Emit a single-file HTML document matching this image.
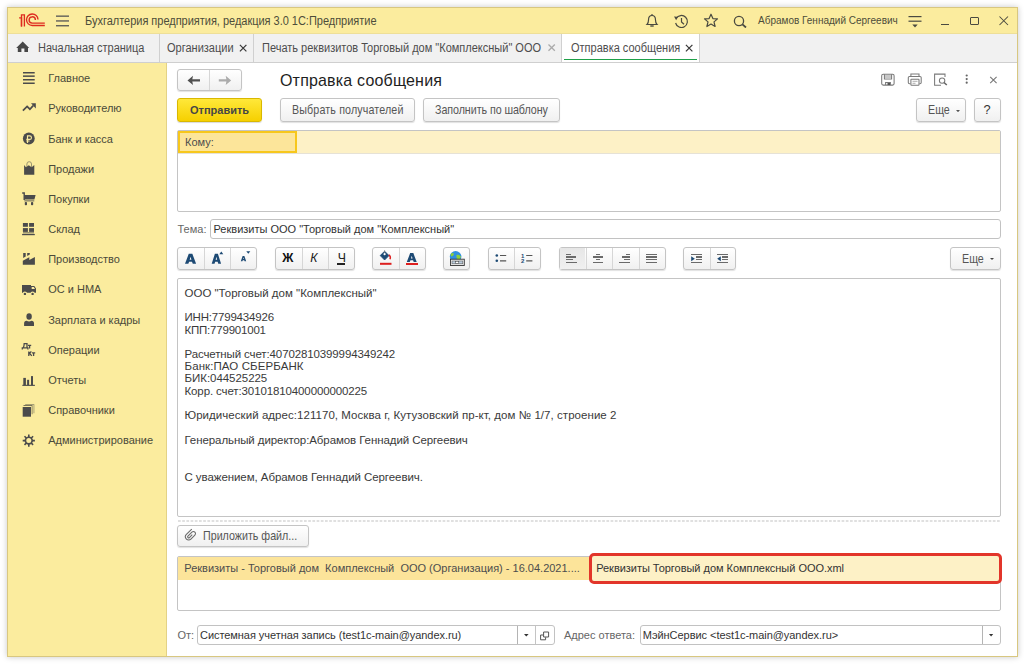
<!DOCTYPE html>
<html><head><meta charset="utf-8">
<style>
*{box-sizing:border-box;margin:0;padding:0}
html,body{width:1024px;height:664px;overflow:hidden;background:#fff;font-family:"Liberation Sans",sans-serif;color:#333}
.a{position:absolute}
.t{position:absolute;white-space:pre;font-size:12px;line-height:13px;transform:scaleX(.9167);transform-origin:0 0}
#win{position:absolute;left:7px;top:7px;width:1011px;height:650px;border:1px solid #d8c780;box-shadow:0 0 6px rgba(0,0,0,.22);background:#fff;overflow:hidden}
.btn{position:absolute;border:1px solid #c4c4c4;border-radius:3px;background:linear-gradient(#ffffff,#f0f0f0);box-shadow:0 1px 1px rgba(0,0,0,.12)}
.bt{position:absolute;white-space:pre;font-size:12.2px;line-height:13px;color:#555;transform:scaleX(.877);transform-origin:0 0}
.dv{position:absolute;top:0;bottom:0;width:1px;background:#d6d6d6}
.side{position:absolute;left:48.2px;white-space:pre;font-size:11px;line-height:13px;color:#4a4a3a}
.ico{position:absolute}
.ed{position:absolute;white-space:pre;font-size:11.5px;line-height:12.2px;color:#3a3a3a}
.inp{position:absolute;border:1px solid #c2c2c2;border-radius:3px;background:#fff}
</style></head><body>
<div id="win"></div>
<!-- title bar -->
<div class="a" style="left:8px;top:8px;width:1009px;height:26px;background:#fbec9e"></div>
<div class="a" style="left:8px;top:33px;width:1009px;height:1px;background:#eedf98"></div>
<!-- tab bar -->
<div class="a" style="left:8px;top:34px;width:1009px;height:29px;background:#f1f1f1;border-bottom:1px solid #cfcfcf"></div>
<!-- sidebar -->
<div class="a" style="left:8px;top:63px;width:159px;height:593px;background:#fbec9e;border-right:1px solid #e3d285"></div>

<!-- 1C logo -->
<svg class="ico" style="left:0;top:0" width="60" height="40" viewBox="0 0 60 40">
<g fill="none" stroke="#de2a1f" stroke-width="1.35">
<path d="M19.1 17.8 H21.5 V26.4"/>
<path d="M21.5 26.4 V14.8 H24.4 V26.4"/>
<path d="M44.8 25.5 H32.3 A5.75 5.75 0 1 1 38.0 19.6"/>
<path d="M44.8 23.1 H32.3 A3.15 3.15 0 1 1 35.4 19.9"/>
</g></svg>
<!-- hamburger -->
<svg class="ico" style="left:56px;top:15px" width="14" height="12"><g fill="#555"><rect x="0" y="0.5" width="13" height="1.3"/><rect x="0" y="5.3" width="13" height="1.3"/><rect x="0" y="10.1" width="13" height="1.3"/></g></svg>
<!-- title texts -->
<div class="t" style="left:85.1px;top:15px;letter-spacing:-0.02px;color:#4d4d3a">Бухгалтерия предприятия, редакция 3.0 1С:Предприятие</div>
<div class="t" style="transform:none;left:758px;top:13.9px;font-size:10px;color:#4d4d3a">Абрамов Геннадий Сергеевич</div>

<!-- title icons -->
<svg class="ico" style="left:645px;top:13px" width="14" height="15" viewBox="0 0 14 15"><g fill="none" stroke="#4a4a40" stroke-width="1.2"><path d="M2 11.5 Q3.5 10 3.5 7 Q3.5 2.5 7 2.5 Q10.5 2.5 10.5 7 Q10.5 10 12 11.5 Z"/><path d="M7 1 V2.5"/></g><path d="M5.3 13 H8.7" stroke="#4a4a40" stroke-width="1.4"/></svg>
<svg class="ico" style="left:673px;top:14px" width="16" height="15" viewBox="0 0 16 15"><g fill="none" stroke="#4a4a40" stroke-width="1.2"><path d="M3.2 4.5 A6 6 0 1 1 2.6 9"/><path d="M8.5 4 V8 L11 10.3"/></g><path d="M1 2.5 L4.8 2.8 L3.2 6.2 Z" fill="#4a4a40"/></svg>
<svg class="ico" style="left:703px;top:13px" width="16" height="15" viewBox="0 0 16 15"><path d="M8 1.2 L9.9 5.6 L14.5 5.9 L11 8.9 L12.1 13.5 L8 11 L3.9 13.5 L5 8.9 L1.5 5.9 L6.1 5.6 Z" fill="none" stroke="#4a4a40" stroke-width="1.2" stroke-linejoin="round"/></svg>
<svg class="ico" style="left:733px;top:15px" width="16" height="13" viewBox="0 0 16 13"><g fill="none" stroke="#4a4a40" stroke-width="1.3"><circle cx="6" cy="6" r="4.6"/><path d="M9.4 9.3 L13 12.5" stroke-width="1.8"/></g></svg>
<svg class="ico" style="left:908px;top:15px" width="15" height="14" viewBox="0 0 15 14"><g fill="#4a4a40"><rect x="0.5" y="1" width="13" height="1.2"/><rect x="0.5" y="5.6" width="13" height="1.2"/><path d="M4.3 9.6 H9.7 L7 12.4 Z"/></g></svg>
<div class="a" style="left:941px;top:24px;width:8px;height:1.3px;background:#4a4a40"></div>
<div class="a" style="left:970px;top:17px;width:9px;height:8px;border:1px solid #4a4a40;border-radius:1px"></div>
<svg class="ico" style="left:999px;top:16px" width="10" height="10" viewBox="0 0 10 10"><path d="M0.5 0.5 L9 9 M9 0.5 L0.5 9" stroke="#4a4a40" stroke-width="1.05"/></svg>

<!-- tabs -->
<svg class="ico" style="left:0;top:0" width="40" height="60" viewBox="0 0 40 60"><path d="M22.7 41.5 L29.2 47.9 H28 V51.9 H24.4 V48.5 H21.4 V51.9 H17.8 V47.9 H16.2 Z" fill="#474747"/></svg>
<div class="t" style="left:38px;top:42px;color:#4d4d4d">Начальная страница</div>
<div class="a" style="left:159px;top:34px;width:1px;height:28px;background:#d0d0d0"></div>
<div class="t" style="left:167.4px;top:42px;color:#4d4d4d">Организации</div>
<svg class="ico" style="left:239px;top:43.7px" width="9" height="9" viewBox="0 0 9 9"><path d="M0.9 0.9 L7.4 7.4 M7.4 0.9 L0.9 7.4" stroke="#3a3a3a" stroke-width="1.25"/></svg>
<div class="a" style="left:253px;top:34px;width:1px;height:28px;background:#d0d0d0"></div>
<div class="t" style="left:262px;top:42px;color:#4d4d4d">Печать реквизитов Торговый дом "Комплексный" ООО</div>
<svg class="ico" style="left:548px;top:44.4px" width="8" height="8" viewBox="0 0 8 8"><path d="M0.5 0.5 L6.8 6.8 M6.8 0.5 L0.5 6.8" stroke="#aaa" stroke-width="1.3"/></svg>
<div class="a" style="left:561px;top:34px;width:1px;height:28px;background:#d0d0d0"></div>
<div class="a" style="left:562px;top:34px;width:137px;height:28px;background:#fff"></div>
<div class="a" style="left:699px;top:34px;width:1px;height:28px;background:#d0d0d0"></div>
<div class="a" style="left:564px;top:58.8px;width:133px;height:1.6px;background:#1ea048"></div>
<div class="t" style="left:571px;top:42px;color:#4d4d4d">Отправка сообщения</div>
<svg class="ico" style="left:685px;top:43.7px" width="9" height="9" viewBox="0 0 9 9"><path d="M0.9 0.9 L7.4 7.4 M7.4 0.9 L0.9 7.4" stroke="#3a3a3a" stroke-width="1.25"/></svg>

<!-- SIDEBAR ITEMS -->
<div class="side" style="top:72.3px">Главное</div>
<div class="side" style="top:102.4px">Руководителю</div>
<div class="side" style="top:132.6px">Банк и касса</div>
<div class="side" style="top:162.7px">Продажи</div>
<div class="side" style="top:192.9px">Покупки</div>
<div class="side" style="top:223.1px">Склад</div>
<div class="side" style="top:253.2px">Производство</div>
<div class="side" style="top:283.3px">ОС и НМА</div>
<div class="side" style="top:313.5px">Зарплата и кадры</div>
<div class="side" style="top:343.6px">Операции</div>
<div class="side" style="top:373.8px">Отчеты</div>
<div class="side" style="top:403.9px">Справочники</div>
<div class="side" style="top:434.1px">Администрирование</div>

<svg class="ico" style="left:0;top:0" width="170" height="460" viewBox="0 0 170 460">
<g fill="#4b4b4b">
<rect x="23" y="72" width="11.7" height="1.5"/><rect x="23" y="75.4" width="11.7" height="1.5"/><rect x="23" y="79" width="11.7" height="1.5"/><rect x="23" y="82.5" width="11.7" height="1.5"/>
</g>
<path d="M22.9 110.6 L27.1 106.4 L29.9 109.2 L33.2 105.6" fill="none" stroke="#4b4b4b" stroke-width="1.7"/>
<path d="M31 103.2 H35.8 V108.4 Z" fill="#4b4b4b"/>
<circle cx="28.8" cy="138.5" r="5.9" fill="#4b4b4b"/>
<path d="M27.5 143 V135.9 H29.7 A1.75 1.75 0 0 1 29.7 139.4 H26.3 M26.3 141 H29.6" fill="none" stroke="#fbec9e" stroke-width="1.15"/>
<path d="M26.9 167.5 V164 A2.3 2.3 0 0 1 31.5 164 V167.5" fill="none" stroke="#9a9470" stroke-width="1"/>
<path d="M24.1 165 L26 167.2 L28.8 165.3 L31.6 167.2 L34.3 165 V174.8 H24.1 Z" fill="#4b4b4b"/>
<path d="M22.2 193 H24.2 V200" fill="none" stroke="#4b4b4b" stroke-width="1.4"/>
<path d="M24.1 195 H35.6 L34.4 199.6 H24.1 Z" fill="#4b4b4b"/>
<rect x="24.3" y="200" width="10" height="1.6" fill="#9a9470"/>
<rect x="24.8" y="202" width="2.2" height="3.2" rx="0.8" fill="#4b4b4b"/>
<rect x="31" y="202" width="2.2" height="3.2" rx="0.8" fill="#4b4b4b"/>
<g fill="#4b4b4b"><rect x="22.9" y="223" width="5" height="3.8"/><rect x="29.1" y="223" width="4.9" height="3.8"/><rect x="22.9" y="228.1" width="5" height="3.8"/><rect x="29.1" y="228.1" width="4.9" height="3.8"/></g>
<rect x="23" y="232" width="11" height="1.4" fill="#9a9470"/>
<rect x="22.1" y="233.9" width="12.7" height="1.3" fill="#4b4b4b"/>
<path d="M23.2 253.1 H25.7 V256.6 L23.2 258 Z M27.2 253.1 H29.8 V254.6 L27.2 256.1 Z" fill="#4b4b4b"/>
<path d="M22.8 264.8 V260.8 L29.3 257.2 V260 L34.9 257 V264.8 Z" fill="#4b4b4b"/>
<path d="M22 285 H31 V292.7 H22 Z M31 286.1 H34.3 L36 288.6 V292.7 H31 Z" fill="#4b4b4b"/>
<path d="M31.7 287.1 H33.8 L35 288.9 H31.7 Z" fill="#fbec9e"/>
<circle cx="24.9" cy="293.6" r="2.1" fill="#fbec9e"/><circle cx="32.6" cy="293.6" r="2.1" fill="#fbec9e"/>
<circle cx="24.9" cy="293.9" r="1.2" fill="#4b4b4b"/><circle cx="32.6" cy="293.9" r="1.2" fill="#4b4b4b"/>
<ellipse cx="29.1" cy="316.5" rx="2.7" ry="3.3" fill="#4b4b4b"/>
<path d="M24.1 325.9 V323.3 Q24.1 320.8 26.6 320.8 Q29 322.4 31.5 320.8 Q34 320.8 34 323.3 V325.9 Z" fill="#4b4b4b"/>
<g fill="none" stroke="#4b4b4b" stroke-width="1.3"><path d="M22.3 349.6 V347.9 H27.9 V349.6 M23.2 347.9 Q24.2 346 24.2 343.6 H27 V347.9"/><path d="M28 345.4 H31.2 M29.6 345.4 V348.4"/><path d="M28.8 351.5 V355.9 M28.8 353.8 L31.4 351.5 M29.5 353.3 L31.8 355.9"/><path d="M32 352.9 H35.2 M33.6 352.9 V355.9"/></g>
<g fill="#4b4b4b"><rect x="23.3" y="377.9" width="2.6" height="7.3"/><rect x="27.1" y="379.8" width="2" height="5.4"/><rect x="31" y="376.1" width="2" height="9.1"/><rect x="22.3" y="384.8" width="12.6" height="1.1"/></g>
<path d="M25.2 404.2 H34.3 V413.3 H33.6 V404.9 H25.2 Z" fill="#8a8566"/>
<path d="M23.5 405.1 H32.5 V414.3 H31.7 V405.9 H23.5 Z" fill="#7a7458"/>
<rect x="22.7" y="407" width="8.3" height="9.7" fill="#4b4b4b"/>
<g stroke="#4b4b4b" stroke-width="1.6"><path d="M28.8 434.5 V446.7 M22.7 440.6 H34.9 M24.5 436.3 L33.1 444.9 M33.1 436.3 L24.5 444.9"/></g>
<circle cx="28.8" cy="440.6" r="4.2" fill="#4b4b4b"/>
<circle cx="28.8" cy="440.6" r="2.5" fill="#fbec9e"/>
</svg>
<!-- FORM -->
<div class="btn" style="left:177px;top:69.4px;width:65px;height:21.5px"><div class="dv" style="left:31.3px"></div></div>
<svg class="ico" style="left:0;top:0" width="240" height="100" viewBox="0 0 240 100"><path d="M187.5 80.4 L193 75.8 L192.3 79.2 H200 V81.6 H192.3 L193 85 Z" fill="#505050"/><path d="M231.2 80.4 L225.7 75.8 L226.4 79.2 H218.8 V81.6 H226.4 L225.7 85 Z" fill="#ababab"/></svg>

<div class="t" style="transform:scaleX(.9639);left:279.8px;top:70.6px;font-size:16.6px;letter-spacing:0.187px;line-height:19px;color:#1e1e1e">Отправка сообщения</div>
<svg class="ico" style="left:0;top:0" width="960" height="100" viewBox="0 0 960 100"><g fill="none" stroke="#7a7a7a" stroke-width="1.05">
<rect x="881.7" y="74.2" width="12.4" height="10.9" rx="1.5"/>
<path d="M884.4 74.2 V79 H891.6 V74.2"/>
<path d="M885.6 85 V82.4 H890.4 V85"/>
<path d="M910.9 76.2 V73.9 H919 V76.2"/>
<path d="M910.4 83.8 H909.5 A1.2 1.2 0 0 1 908.3 82.6 V77.6 A1.2 1.2 0 0 1 909.5 76.4 H920 A1.2 1.2 0 0 1 921.2 77.6 V82.6 A1.2 1.2 0 0 1 920 83.8 H919.4"/>
<rect x="910.9" y="79.2" width="8.1" height="6.1" rx="0.6"/>
<path d="M941 85.3 H934.6 V74.1 H945 V77"/>
<circle cx="942.1" cy="80.6" r="2.7"/>
</g>
<rect x="885" y="75" width="6" height="3.5" fill="#c8c8c8"/>
<rect x="887.5" y="83" width="2.5" height="2" fill="#555"/>
<path d="M912.5 81.3 H917.5 M912.5 83.3 H915.5" stroke="#9a9a9a" stroke-width="0.8"/>
<path d="M944 82.5 L946.8 85" stroke="#666" stroke-width="1.6"/>
</svg>


<svg class="ico" style="left:965px;top:74px" width="4" height="11"><g fill="#666"><circle cx="1.7" cy="1.5" r="1.1"/><circle cx="1.7" cy="5.1" r="1.1"/><circle cx="1.7" cy="8.7" r="1.1"/></g></svg>
<svg class="ico" style="left:989px;top:76px" width="9" height="8" viewBox="0 0 9 8"><path d="M1.2 0.9 L7.6 7.1 M7.6 0.9 L1.2 7.1" stroke="#777" stroke-width="1.1"/></svg>
<div class="a" style="left:177px;top:98px;width:85px;height:24px;border:1px solid #d9b800;border-radius:3px;background:linear-gradient(#ffe83a,#f6d000);box-shadow:0 1px 1px rgba(0,0,0,.15)"></div>
<div class="t" style="font-size:11px;transform:none;left:190px;top:103.6px;font-weight:bold;color:#464646">Отправить</div>
<div class="btn" style="left:280px;top:98px;width:135px;height:24px"></div>
<div class="bt" style="left:291.6px;top:104.1px;letter-spacing:0.16px">Выбрать получателей</div>
<div class="btn" style="left:423px;top:98px;width:137px;height:24px"></div>
<div class="bt" style="left:434.8px;top:104.1px;letter-spacing:-0.06px">Заполнить по шаблону</div>
<div class="btn" style="left:916px;top:98px;width:50px;height:24px"></div>
<div class="bt" style="left:928px;top:104.1px">Еще</div>
<svg class="ico" style="left:956px;top:109.8px" width="4" height="2.4"><path d="M0 0 H4 L2 2.2 Z" fill="#555"/></svg>
<div class="btn" style="left:974px;top:98px;width:27px;height:24px"></div>
<div class="t" style="transform:none;left:983.6px;top:102.6px;font-size:12.8px;line-height:14px;color:#333">?</div>
<div class="a" style="left:177px;top:130px;width:824px;height:82px;border:1px solid #c4c4c4;border-radius:2px;background:#fff"></div>
<div class="a" style="left:178px;top:131px;width:822px;height:23px;background:#fdf1c6;border-bottom:1px solid #e6e2d6"></div>
<div class="a" style="left:178px;top:131px;width:119px;height:22px;background:#fce59a;border:2px solid #f7c71c"></div>
<div class="t" style="font-size:11px;transform:none;left:185px;top:135.8px;color:#4d4d4d">Кому:</div>
<div class="t" style="font-size:11px;transform:none;left:177.5px;top:223px;color:#666">Тема:</div>
<div class="inp" style="left:210px;top:219px;width:791px;height:20px"></div>
<div class="t" style="font-size:11px;transform:none;left:213.5px;top:223px;color:#333">Реквизиты ООО "Торговый дом "Комплексный"</div>
<div class="btn" style="left:177px;top:247px;width:80px;height:23px"><div class="dv" style="left:26px"></div><div class="dv" style="left:52px"></div></div>
<div class="btn" style="left:275px;top:247px;width:80px;height:23px"><div class="dv" style="left:26px"></div><div class="dv" style="left:52px"></div></div>
<div class="btn" style="left:372px;top:247px;width:54px;height:23px"><div class="dv" style="left:26px"></div></div>
<div class="btn" style="left:443px;top:247px;width:27px;height:23px"></div>
<div class="btn" style="left:488px;top:247px;width:53px;height:23px"><div class="dv" style="left:25px"></div></div>
<div class="btn" style="left:559px;top:247px;width:107px;height:23px"><div class="dv" style="left:26px"></div><div class="dv" style="left:52px"></div><div class="dv" style="left:79px"></div></div>
<div class="btn" style="left:683px;top:247px;width:53px;height:23px"><div class="dv" style="left:26px"></div></div>
<div class="a" style="left:560px;top:248px;width:25px;height:21px;background:linear-gradient(#e6e6e6,#f0f0f0)"></div>
<div class="btn" style="left:950px;top:247px;width:51px;height:23px"></div>
<div class="bt" style="left:962px;top:252.6px">Еще</div>
<svg class="ico" style="left:990.3px;top:257.8px" width="5" height="3"><path d="M0 0 H4 L2 2.1 Z" fill="#444"/></svg>
<div class="a" style="left:177px;top:278px;width:824px;height:239px;border:1px solid #c4c4c4;border-radius:2px;background:#fff"></div>
<div class="ed" style="left:184.5px;letter-spacing:0.000px;top:286.9px">ООО "Торговый дом "Комплексный"</div>
<div class="ed" style="left:184.5px;letter-spacing:-0.192px;top:311.2px">ИНН:7799434926</div>
<div class="ed" style="left:184.5px;letter-spacing:-0.208px;top:323.5px">КПП:779901001</div>
<div class="ed" style="left:184.5px;letter-spacing:-0.121px;top:347.9px">Расчетный счет:40702810399994349242</div>
<div class="ed" style="left:184.5px;letter-spacing:0.094px;top:360.1px">Банк:ПАО СБЕРБАНК</div>
<div class="ed" style="left:184.5px;letter-spacing:-0.042px;top:372.3px">БИК:044525225</div>
<div class="ed" style="left:184.5px;letter-spacing:-0.117px;top:384.5px">Корр. счет:30101810400000000225</div>
<div class="ed" style="left:184.5px;letter-spacing:0.050px;top:409.4px">Юридический адрес:121170, Москва г, Кутузовский пр-кт, дом № 1/7, строение 2</div>
<div class="ed" style="left:184.5px;letter-spacing:-0.085px;top:433.7px">Генеральный директор:Абрамов Геннадий Сергеевич</div>
<div class="ed" style="left:184.5px;letter-spacing:-0.069px;top:471.1px">С уважением, Абрамов Геннадий Сергеевич.</div>
<svg class="ico" style="left:177px;top:520px" width="824" height="2"><line x1="1" y1="1" x2="824" y2="1" stroke="#e0e0e0" stroke-width="2" stroke-dasharray="2.7 1.5"/></svg>
<div class="btn" style="left:177px;top:525px;width:132px;height:22px"></div>
<svg class="ico" style="left:0;top:0" width="200" height="550" viewBox="0 0 200 550"><path transform="translate(190.2 535.2) rotate(45)" d="M-3.2 -5.4 V2.2 A3.2 3.2 0 0 0 3.2 2.2 V-3.4 A2.1 2.1 0 0 0 -1 -3.4 V2.2 A1.05 1.05 0 0 0 1.1 2.2 V-1.8" fill="none" stroke="#6a6a6a" stroke-width="1.05"/></svg>
<div class="bt" style="left:202.8px;top:530.3px">Приложить файл...</div>
<div class="a" style="left:177px;top:556px;width:824px;height:55px;border:1px solid #c4c4c4;border-radius:2px;background:#fff"></div>
<div class="a" style="left:178px;top:557px;width:412px;height:23px;background:#fce49a"></div>
<div class="t" style="font-size:11px;transform:none;left:184.3px;top:562.2px;color:#4d4d4d">Реквизиты - Торговый дом  Комплексный  ООО (Организация) - 16.04.2021....</div>
<div class="a" style="left:589px;top:553px;width:413px;height:31px;border:3.2px solid #e2352a;border-radius:5px;background:#fdf1c6"></div>
<div class="t" style="font-size:11px;transform:none;left:596.2px;top:562.4px;letter-spacing:-0.03px;color:#333">Реквизиты Торговый дом Комплексный ООО.xml</div>
<div class="t" style="font-size:11px;transform:none;left:177.5px;top:629.2px;color:#666">От:</div>
<div class="inp" style="left:197px;top:625px;width:358px;height:20px"><div class="dv" style="left:319.3px;background:#b4b4b4"></div><div class="dv" style="left:337.2px;background:#c4c4c4"></div></div>
<div class="t" style="font-size:11px;transform:none;left:200px;top:629.2px;letter-spacing:-0.055px;color:#333">Системная учетная запись (test1c-main@yandex.ru)</div>
<svg class="ico" style="left:524.1px;top:634.3px" width="5" height="3"><path d="M0 0 H4.6 L2.3 2.6 Z" fill="#333"/></svg>
<svg class="ico" style="left:0;top:0" width="560" height="650" viewBox="0 0 560 650"><g fill="none" stroke="#555" stroke-width="1"><path d="M543.6 632 H548.6 V637 H543.6 Z"/><path d="M543.3 635 H540.6 V639.8 H545.6 V637.3"/></g></svg>
<div class="t" style="font-size:11px;transform:none;left:564px;top:629.2px;color:#666">Адрес ответа:</div>
<div class="inp" style="left:640px;top:625px;width:361px;height:20px"><div class="dv" style="left:340.5px;background:#b4b4b4"></div></div>
<div class="t" style="font-size:11px;transform:none;left:642.7px;top:629.2px;letter-spacing:-0.048px;color:#333">МэйнСервис &lt;test1c-main@yandex.ru&gt;</div>
<svg class="ico" style="left:988.9px;top:634.2px" width="5" height="3"><path d="M0 0 H4.2 L2.1 2.6 Z" fill="#333"/></svg>
<svg class="ico" style="left:0;top:0" width="430" height="270" viewBox="0 0 430 270"><path fill-rule="evenodd" fill="#1d4a74" d="M185.00 263.70 L188.77 253.80 L192.33 253.80 L196.10 263.70 L192.77 263.70 L191.99 261.72 L189.11 261.72 L188.33 263.70 Z M189.66 259.74 L191.44 259.74 L190.55 256.77 Z M211.70 263.70 L214.90 253.80 L217.90 253.80 L221.10 263.70 L218.28 263.70 L217.62 261.72 L215.18 261.72 L214.52 263.70 Z M215.65 259.74 L217.15 259.74 L216.40 256.77 Z M240.80 261.20 L242.64 255.90 L244.36 255.90 L246.20 261.20 L244.58 261.20 L244.20 260.14 L242.80 260.14 L242.42 261.20 Z M243.07 259.08 L243.93 259.08 L243.50 257.49 Z M406.80 262.10 L410.17 253.10 L413.33 253.10 L416.70 262.10 L413.73 262.10 L413.04 260.30 L410.46 260.30 L409.77 262.10 Z M410.96 258.50 L412.54 258.50 L411.75 255.80 Z"/></svg>
<svg class="ico" style="left:219px;top:251px" width="5" height="4"><path d="M0.3 3.3 L2.3 0.5 L4.3 3.3 Z" fill="#1d4a74"/></svg>
<svg class="ico" style="left:245.8px;top:251.3px" width="5" height="4"><path d="M0.3 0.3 H4.3 L2.3 2.8 Z" fill="#1d4a74"/></svg>
<div class="t" style="transform:none;left:282.2px;top:250.5px;font-size:12.3px;line-height:14px;font-weight:bold;color:#111">Ж</div>
<div class="t" style="transform:none;left:310.3px;top:250.5px;font-size:12.3px;line-height:14px;font-style:italic;color:#222">К</div>
<div class="t" style="transform:none;left:337.8px;top:250.5px;font-size:12.3px;line-height:14px;color:#222">Ч</div>
<div class="a" style="left:336.8px;top:263.3px;width:8.4px;height:1.3px;background:#222"></div>
<svg class="ico" style="left:379px;top:250px" width="14" height="16" viewBox="0 0 14 16"><path d="M5.6 1.2 L10 5.6 L5.6 10 L1.2 5.6 Z" fill="#1d4a74" stroke="#1d4a74" stroke-width="0.8" stroke-linejoin="round"/><circle cx="5.6" cy="4.2" r="1.1" fill="#fff"/><path d="M5.6 0 V3" stroke="#888" stroke-width="0.7"/><path d="M9.8 4.8 Q12.2 6.2 11 9.3" fill="none" stroke="#dd1f1f" stroke-width="1.4"/><rect x="1" y="12.8" width="11.5" height="2" fill="#dd1f1f"/></svg>
<div class="a" style="left:406px;top:262.8px;width:11.5px;height:2px;background:#dd1f1f"></div>
<svg class="ico" style="left:448px;top:250px" width="18" height="17" viewBox="0 0 18 17"><circle cx="7.6" cy="6.8" r="5.8" fill="#2e8fe0"/><path d="M3 3.5 Q5 2.5 6 4 Q5.5 6 3.3 6.5 Q2.2 5 3 3.5 Z M8.5 5 Q11 4 13 6.5 Q12.5 9.5 10 10 Q8 8.5 8.5 5 Z" fill="#8ccf3a"/><rect x="2.5" y="9.2" width="13.8" height="6.3" fill="#e8e8e8" stroke="#333" stroke-width="0.9"/><rect x="4" y="11" width="10.8" height="2.8" fill="#bcd" stroke="#555" stroke-width="0.5"/><rect x="7.3" y="11.3" width="3.5" height="2.2" fill="#fff" stroke="#333" stroke-width="0.5"/></svg>
<svg class="ico" style="left:495px;top:253px" width="13" height="10" viewBox="0 0 13 10"><g fill="#1d4a74"><circle cx="1.8" cy="2.5" r="1.3"/><circle cx="1.8" cy="7.8" r="1.3"/></g><g stroke="#555" stroke-width="1.2"><path d="M5 2.5 H11.2 M5 7.8 H11.2"/></g></svg>
<div class="t" style="transform:none;left:520.9px;top:252.6px;font-size:6px;line-height:6px;font-weight:bold;color:#1d4a74">1</div>
<div class="t" style="transform:none;left:520.9px;top:257.6px;font-size:6px;line-height:6px;font-weight:bold;color:#1d4a74">2</div>
<svg class="ico" style="left:526px;top:253px" width="7" height="10" viewBox="0 0 7 10"><g stroke="#555" stroke-width="1.2"><path d="M0.2 2.5 H6.4 M0.2 7.8 H6.4"/></g></svg>
<div class="a" style="left:566.4px;top:253.7px;width:4.9px;height:1.4px;background:#6a6a6a"></div><div class="a" style="left:566.4px;top:256.4px;width:9.3px;height:1.4px;background:#6a6a6a"></div><div class="a" style="left:566.4px;top:259.1px;width:7.1px;height:1.4px;background:#6a6a6a"></div><div class="a" style="left:566.4px;top:261.9px;width:10.9px;height:1.4px;background:#6a6a6a"></div>
<div class="a" style="left:595.9px;top:253.7px;width:4.4px;height:1.4px;background:#6a6a6a"></div><div class="a" style="left:592.6px;top:256.4px;width:10.6px;height:1.4px;background:#6a6a6a"></div><div class="a" style="left:595.9px;top:259.1px;width:4.4px;height:1.4px;background:#6a6a6a"></div><div class="a" style="left:592.6px;top:261.9px;width:10.9px;height:1.4px;background:#6a6a6a"></div>
<div class="a" style="left:626.0px;top:253.7px;width:4.0px;height:1.4px;background:#6a6a6a"></div><div class="a" style="left:621.6px;top:256.4px;width:8.4px;height:1.4px;background:#6a6a6a"></div><div class="a" style="left:623.6px;top:259.1px;width:6.4px;height:1.4px;background:#6a6a6a"></div><div class="a" style="left:619.3px;top:261.9px;width:10.7px;height:1.4px;background:#6a6a6a"></div>
<div class="a" style="left:646.2px;top:253.7px;width:10.6px;height:1.4px;background:#6a6a6a"></div><div class="a" style="left:646.2px;top:256.4px;width:10.6px;height:1.4px;background:#6a6a6a"></div><div class="a" style="left:646.2px;top:259.1px;width:10.6px;height:1.4px;background:#6a6a6a"></div><div class="a" style="left:646.2px;top:261.9px;width:10.6px;height:1.4px;background:#6a6a6a"></div>
<div class="a" style="left:691.1px;top:253.7px;width:10.7px;height:1.4px;background:#6a6a6a"></div><div class="a" style="left:695.8px;top:256.4px;width:6.0px;height:1.4px;background:#6a6a6a"></div><div class="a" style="left:695.8px;top:259.1px;width:6.0px;height:1.4px;background:#6a6a6a"></div><div class="a" style="left:691.1px;top:261.9px;width:10.7px;height:1.4px;background:#6a6a6a"></div>
<svg class="ico" style="left:690.8px;top:255.5px" width="5" height="6"><path d="M0.2 0.2 L3.8 2.7 L0.2 5.2 Z" fill="#1d4a74"/></svg>
<div class="a" style="left:717.2px;top:253.7px;width:10.7px;height:1.4px;background:#6a6a6a"></div><div class="a" style="left:721.9px;top:256.4px;width:6.0px;height:1.4px;background:#6a6a6a"></div><div class="a" style="left:721.9px;top:259.1px;width:6.0px;height:1.4px;background:#6a6a6a"></div><div class="a" style="left:717.2px;top:261.9px;width:10.7px;height:1.4px;background:#6a6a6a"></div>
<svg class="ico" style="left:716.8px;top:255.5px" width="5" height="6"><path d="M3.8 0.2 L0.2 2.7 L3.8 5.2 Z" fill="#1d4a74"/></svg>

</body></html>
